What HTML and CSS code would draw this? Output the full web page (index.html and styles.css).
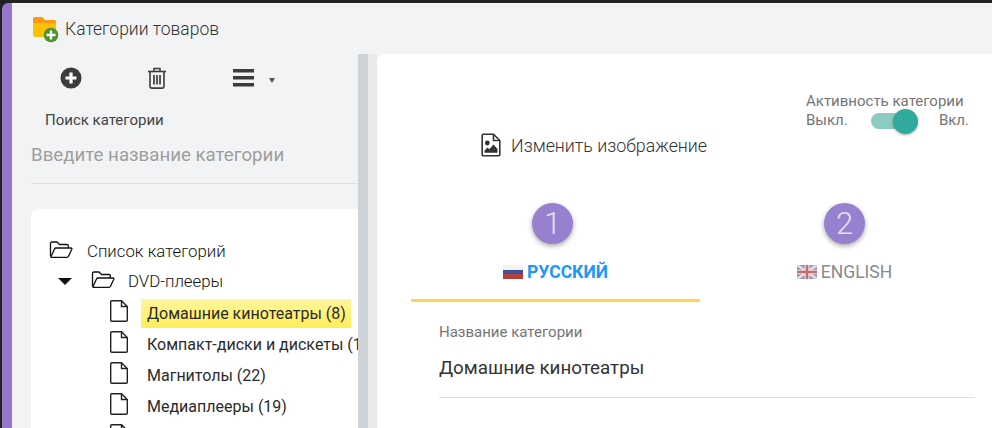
FILE: index.html
```html
<!DOCTYPE html>
<html lang="ru">
<head>
    <meta charset="UTF-8">
    <title>Категории товаров</title>
    <link rel="stylesheet" href="styles.css">
</head>
<body>
    <div class="app">
        <div class="title-bar">
            <svg class="title-icon" width="26" height="26" viewBox="0 0 26 26">
                <path d="M0 2C0 1 .8 0 2 0h7l3 3h9c1 0 2 .9 2 2v13c0 1-1 2-2 2H2c-1.200 0-2-1-2-2Z" fill="#ffc107"/>
                <path d="M0 2C0 1 .8 0 2 0h7l3 3h9c1 0 2 .9 2 2v1H0Z" fill="#fb9a0e"/>
                <circle cx="18" cy="18" r="7.300" fill="#4f9130"/>
                <path d="M18 13.500v9M13.500 18h9" stroke="#fff" stroke-width="2.400"/>
            </svg>
            <span class="title-text">Категории товаров</span>
        </div>
        <div class="main">
            <div class="sidebar">
                <div class="toolbar">
                    <svg class="tool-add" width="22" height="22" viewBox="0 0 22 22">
                        <circle cx="11" cy="11" r="10.500" fill="#3c3c3c"/>
                        <path d="M11 5.500v11M5.500 11h11" stroke="#fff" stroke-width="3.200"/>
                    </svg>
                    <svg class="tool-trash" width="20" height="22" viewBox="0 0 20 22" fill="none" stroke="#3c3c3c">
                        <path d="M1 4.500h18" stroke-width="1.600"/>
                        <path d="M7 4V1.500h6V4" stroke-width="1.500"/>
                        <path d="M3 4.500V19.500c0 1 .6 1.600 1.500 1.600h11c.9 0 1.500-.6 1.500-1.600V4.500" stroke-width="1.600"/>
                        <path d="M7 8v9.500M10 8v9.500M13 8v9.500" stroke-width="1.700"/>
                    </svg>
                    <svg class="tool-menu" width="21" height="18" viewBox="0 0 21 18" fill="#3c3c3c">
                        <rect y="0" width="21" height="3.500"/>
                        <rect y="7" width="21" height="3.500"/>
                        <rect y="14" width="21" height="3.500"/>
                    </svg>
                    <span class="caret"></span>
                </div>
                <div class="search-label">Поиск категории</div>
                <div class="search-input">Введите название категории</div>
                <div class="tree-card">
                    <div class="tree-row tree-root">
                        <svg class="icon-open" width="24" height="18" viewBox="0 0 24 18" fill="none" stroke="#111" stroke-width="1.300">
                            <path d="M1.500 15V2.500C1.500 1.700 2 1 3 1h5l2.500 2.500H18c.8 0 1.300.6 1.300 1.300V7"/>
                            <path d="M1.700 16.300 5.500 8c.2-.6.7-1 1.400-1H22c.7 0 1.100.6.800 1.300l-3.300 6.900c-.3.700-.9 1.100-1.600 1.100H2.500c-.5 0-.9-.4-.8-1Z"/>
                        </svg>
                        <span>Список категорий</span>
                    </div>
                    <div class="tree-row tree-branch">
                        <span class="arrow"></span>
                        <svg class="icon-open" width="24" height="18" viewBox="0 0 24 18" fill="none" stroke="#111" stroke-width="1.300">
                            <path d="M1.500 15V2.500C1.500 1.700 2 1 3 1h5l2.500 2.500H18c.8 0 1.300.6 1.300 1.300V7"/>
                            <path d="M1.700 16.300 5.500 8c.2-.6.7-1 1.400-1H22c.7 0 1.100.6.800 1.300l-3.300 6.900c-.3.700-.9 1.100-1.600 1.100H2.500c-.5 0-.9-.4-.8-1Z"/>
                        </svg>
                        <span>DVD-плееры</span>
                    </div>
                    <div class="tree-row tree-leaf">
                        <svg class="icon-file" width="20" height="22" viewBox="0 0 20 22" fill="none" stroke="#222" stroke-width="1.400"><path d="M1.700 1.700c0-.6.400-1 1-1h9.800l5.800 5.800V20.300c0 .6-.4 1-1 1H2.700c-.6 0-1-.4-1-1ZM12.500 .7V6.500h5.800"/></svg>
                        <span class="leaf-text selected">Домашние кинотеатры (8)</span>
                    </div>
                    <div class="tree-row tree-leaf">
                        <svg class="icon-file" width="20" height="22" viewBox="0 0 20 22" fill="none" stroke="#222" stroke-width="1.400"><path d="M1.700 1.700c0-.6.400-1 1-1h9.800l5.800 5.800V20.300c0 .6-.4 1-1 1H2.700c-.6 0-1-.4-1-1ZM12.500 .7V6.500h5.800"/></svg>
                        <span class="leaf-text">Компакт-диски и дискеты (14)</span>
                    </div>
                    <div class="tree-row tree-leaf">
                        <svg class="icon-file" width="20" height="22" viewBox="0 0 20 22" fill="none" stroke="#222" stroke-width="1.400"><path d="M1.700 1.700c0-.6.400-1 1-1h9.800l5.800 5.800V20.300c0 .6-.4 1-1 1H2.700c-.6 0-1-.4-1-1ZM12.500 .7V6.500h5.800"/></svg>
                        <span class="leaf-text">Магнитолы (22)</span>
                    </div>
                    <div class="tree-row tree-leaf">
                        <svg class="icon-file" width="20" height="22" viewBox="0 0 20 22" fill="none" stroke="#222" stroke-width="1.400"><path d="M1.700 1.700c0-.6.400-1 1-1h9.800l5.800 5.800V20.300c0 .6-.4 1-1 1H2.700c-.6 0-1-.4-1-1ZM12.500 .7V6.500h5.800"/></svg>
                        <span class="leaf-text">Медиаплееры (19)</span>
                    </div>
                    <div class="tree-row tree-leaf">
                        <svg class="icon-file" width="20" height="22" viewBox="0 0 20 22" fill="none" stroke="#222" stroke-width="1.400"><path d="M1.700 1.700c0-.6.400-1 1-1h9.800l5.800 5.800V20.300c0 .6-.4 1-1 1H2.700c-.6 0-1-.4-1-1ZM12.500 .7V6.500h5.800"/></svg>
                    </div>
                </div>
            </div>
            <div class="splitter"></div>
            <div class="content">
                <div class="content-top">
                    <div class="change-image">
                        <svg width="20" height="24" viewBox="0 0 20 24" fill="none">
                            <path d="M1.200 2.200c0-.6.400-1 1-1h10.300l6.300 6.300V21.800c0 .6-.4 1-1 1H2.200c-.6 0-1-.4-1-1Z" stroke="#333" stroke-width="1.600"/>
                            <path d="M12.500 1.200V7.500h6.300" stroke="#333" stroke-width="1.600"/>
                            <circle cx="6.300" cy="10" r="2.400" fill="#333"/>
                            <path d="M3.500 19.800v-2.300l3-3 1.800 1.800 4.200-4.800 4 4.500v3.800Z" fill="#333"/>
                        </svg>
                        <span>Изменить изображение</span>
                    </div>
                    <div class="activity">
                        <div class="activity-title">Активность категории</div>
                        <div class="activity-row">
                            <span>Выкл.</span>
                            <span class="switch"><span class="switch-knob"></span></span>
                            <span class="activity-on">Вкл.</span>
                        </div>
                    </div>
                </div>
                <div class="tabs">
                    <div class="tab tab-active">
                        <div class="step">1</div>
                        <div class="tab-label">
                            <span class="flag-ru"></span>
                            <span>РУССКИЙ</span>
                        </div>
                    </div>
                    <div class="tab">
                        <div class="step">2</div>
                        <div class="tab-label">
                            <svg class="flag-en" width="20" height="14" viewBox="0 0 20 14">
                                <rect width="20" height="14" fill="#9a9ab5"/>
                                <path d="M0 0 20 14M20 0 0 14" stroke="#e6dfe4" stroke-width="2.600"/>
                                <path d="M10 0v14M0 7h20" stroke="#e8dfe2" stroke-width="4.500"/>
                                <path d="M10 0v14M0 7h20" stroke="#c96a6e" stroke-width="2.400"/>
                            </svg>
                            <span>ENGLISH</span>
                        </div>
                    </div>
                </div>
                <div class="field">
                    <div class="field-label">Название категории</div>
                    <div class="field-value">Домашние кинотеатры</div>
                </div>
            </div>
        </div>
    </div>
</body>
</html>
```

FILE: styles.css
```css
html, body {
    height: 100%;
}

body {
    margin: 0;
    background-color: #222;
    font-family: Roboto, sans-serif;
    overflow: hidden;
}

.app {
    height: 425px;
    margin: 3px 0 0 2px;
    border-left: 10px solid #9575cd;
    border-top-left-radius: 6px;
    background-color: #f1f3f5;
    display: flex;
    flex-direction: column;
    overflow: hidden;
}

.title-bar {
    height: 51px;
    flex: none;
    display: flex;
    align-items: center;
    padding-left: 21px;
    gap: 6px;
    box-sizing: border-box;
}

.title-icon {
    flex: none;
    margin-top: 3px;
}

.title-text {
    font-size: 17.500px;
    font-weight: 300;
    color: #333;
}

.main {
    flex: 1;
    display: flex;
    min-height: 0;
}

.sidebar {
    width: 346px;
    flex: none;
    overflow: hidden;
}

.toolbar {
    display: flex;
    align-items: center;
    height: 24px;
    padding: 0 0 0 48px;
    margin-top: 12px;
}

.tool-trash {
    margin-left: 65px;
}

.tool-menu {
    margin-left: 66px;
}

.caret {
    margin-left: 15px;
    margin-top: 5px;
    border-left: 3px solid transparent;
    border-right: 3px solid transparent;
    border-top: 5px solid #555;
}

.search-label {
    margin: 20px 0 0 33px;
    font-size: 15px;
    color: #444;
    line-height: 20px;
}

.search-input {
    margin: 13px 0 0 19px;
    padding-bottom: 16px;
    border-bottom: 1px solid #dcdee0;
    font-size: 18.700px;
    line-height: 24px;
    color: #9e9e9e;
}

.tree-card {
    margin: 25px 0 0 19px;
    padding-top: 27px;
    height: 300px;
    background: white;
    border-top-left-radius: 8px;
}

.tree-row {
    display: flex;
    align-items: center;
    height: 31px;
    font-size: 16.800px;
    font-weight: 300;
    color: #111;
    white-space: nowrap;
}

.tree-row svg {
    flex: none;
}

.tree-root {
    height: 30px;
    padding-left: 18px;
    gap: 14px;
}

.tree-branch {
    height: 30px;
    margin-bottom: 2px;
    padding-left: 27px;
    gap: 13px;
}

.icon-open {
    margin-bottom: 2px;
}

.arrow {
    flex: none;
    margin-right: 6px;
    border-left: 7px solid transparent;
    border-right: 7px solid transparent;
    border-top: 7px solid #111;
}

.tree-leaf {
    padding-left: 78px;
    gap: 12px;
}

.tree-leaf .icon-file {
    margin-bottom: 6px;
}

.leaf-text {
    padding: 1px 5px 0 6px;
    line-height: 28px;
    font-weight: 400;
    font-size: 16px;
    color: #2b2b2b;
}

.selected {
    background: linear-gradient(#fff59d, #ffee58);
}

.splitter {
    width: 19px;
    flex: none;
    background: linear-gradient(to right, #ced3d7 10px, #e8eaec 10px);
}

.content {
    flex: 1;
    min-width: 0;
    background: white;
    border-top-left-radius: 8px;
    padding: 0 17px 0 34px;
}

.content-top {
    display: flex;
    justify-content: space-between;
    height: 140px;
}

.change-image {
    display: flex;
    align-items: center;
    gap: 10px;
    margin: 76px 0 0 70px;
    height: 30px;
    font-size: 17.800px;
    font-weight: 300;
    color: #333;
}

.activity {
    width: 163px;
    margin: 38px 6px 0 0;
    font-size: 15px;
    color: #757575;
    line-height: 19px;
}

.activity-row {
    display: flex;
    align-items: center;
}

.switch {
    width: 38px;
    height: 16px;
    margin-left: 23px;
    border-radius: 8px;
    background: #8ccbc2;
    position: relative;
}

.switch-knob {
    position: absolute;
    right: -9px;
    top: -4px;
    width: 25px;
    height: 25px;
    border-radius: 50%;
    background: #30aa9c;
    box-shadow: 0 1px 3px rgba(0, 0, 0, .35);
}

.activity-on {
    margin-left: auto;
}

.tabs {
    display: flex;
    margin-top: 9px;
}

.tab {
    width: 289px;
    height: 99px;
    flex: none;
    box-sizing: border-box;
    display: flex;
    flex-direction: column;
    align-items: center;
    color: #8a8a8a;
}

.tab-active {
    border-bottom: 3px solid #fdd549;
    color: #2196f3;
    font-weight: 700;
}

.step {
    width: 41px;
    height: 41px;
    border-radius: 50%;
    background: #9780d0;
    color: #e4e0ee;
    font-size: 31px;
    font-weight: 300;
    line-height: 41px;
    text-align: center;
    box-shadow: 0 2px 5px rgba(0, 0, 0, .35);
}

.tab-active .step {
    margin-right: 6px;
}

.tab-label {
    display: flex;
    align-items: center;
    gap: 4px;
    margin-top: 16px;
    font-size: 17.500px;
    height: 24px;
}

.flag-ru {
    width: 20px;
    height: 14px;
    background: linear-gradient(#f2f2f2 33%, #3f4fa0 33%, #3f4fa0 66%, #b2413a 66%);
    filter: blur(.5px);
}

.flag-en {
    flex: none;
    filter: blur(.5px);
}

.field {
    margin: 20px 0 0 28px;
    padding-bottom: 17px;
    border-bottom: 1px solid #dfdfdf;
}

.field-label {
    font-size: 15px;
    color: #757575;
    line-height: 20px;
}

.field-value {
    margin-top: 14px;
    font-size: 18.800px;
    color: #333;
    line-height: 24px;
}
```
